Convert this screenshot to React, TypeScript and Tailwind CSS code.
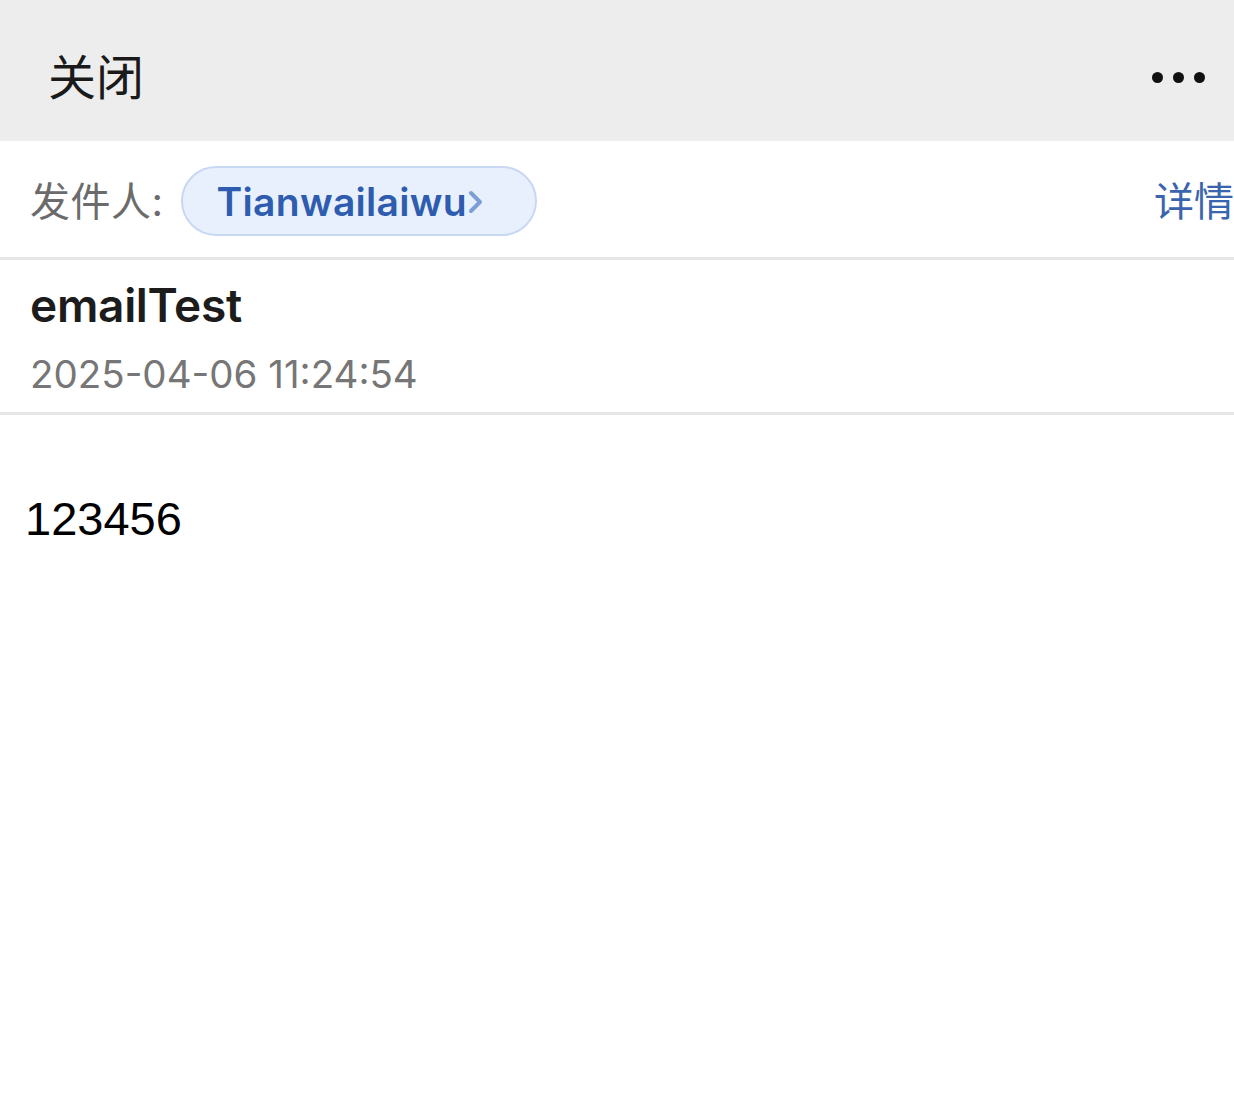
export default function App() {
  return (
    <div
      className="w-[1234px] h-[1113px] bg-white overflow-hidden"
      style={{ fontFamily: 'Inter, "Noto Sans CJK SC", sans-serif' }}
    >
      <header className="h-[141px] bg-[#ededed] flex items-center justify-between pl-[48px] pr-[29px]">
        <span className="text-[48px] leading-none text-[#1a1a1a] pt-[14px]">关闭</span>
        <div className="flex items-center gap-[10px] pt-[14px]">
          <span className="w-[11px] h-[11px] rounded-full bg-[#111]" />
          <span className="w-[11px] h-[11px] rounded-full bg-[#111]" />
          <span className="w-[11px] h-[11px] rounded-full bg-[#111]" />
        </div>
      </header>

      <div className="h-[119px] flex items-center justify-between pl-[30px] pt-[4px] border-b-[3px] border-[#e6e6e6]">
        <div className="flex items-center gap-[17px]">
          <span className="text-[40px] text-[#6b6b6b] leading-none tracking-[0.5px] pt-[2px]">发件人:</span>
          <div className="h-[70px] w-[356px] rounded-full bg-[#e8f0fd] border-2 border-[#c8d8f3] flex items-center pl-[34px]">
            <span className="text-[39px] font-semibold text-[#2e5cae] leading-none tracking-[0.3px]">Tianwailaiwu</span>
            <svg width="16" height="24" viewBox="0 0 16 24" className="ml-[1px] mt-[2px]">
              <path d="M3 3 L12 12 L3 21" fill="none" stroke="#7d9fd6" strokeWidth="4" strokeLinecap="round" strokeLinejoin="round" />
            </svg>
          </div>
        </div>
        <span className="text-[40px] text-[#3a64ad] leading-none whitespace-nowrap pt-[2px]">详情</span>
      </div>

      <div className="h-[155px] pl-[30px] pt-[22px] border-b-[3px] border-[#e6e6e6]">
        <div className="text-[46px] font-semibold text-[#1c1c1c] leading-none tracking-[-0.3px]">emailTest</div>
        <div className="text-[38.5px] text-[#767676] leading-none mt-[27px]">2025-04-06 11:24:54</div>
      </div>

      <div
        className="pl-[25px] pt-[80px] text-[47px] text-black leading-none"
        style={{ fontFamily: '"Liberation Sans", Arial, sans-serif' }}
      >
        123456
      </div>
    </div>
  );
}
